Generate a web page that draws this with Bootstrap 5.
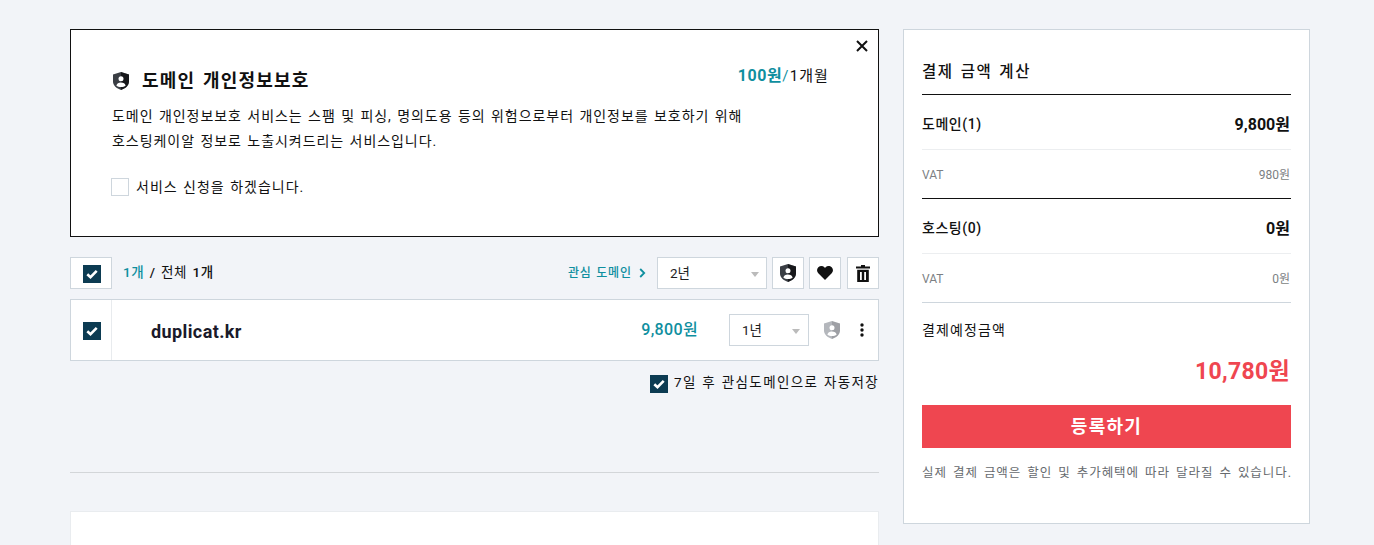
<!DOCTYPE html>
<html lang="ko">
<head>
<meta charset="utf-8">
<title>결제</title>
<link href="https://cdn.jsdelivr.net/npm/bootstrap@5.3.0/dist/css/bootstrap.min.css" rel="stylesheet">
<style>
html,body{height:545px;overflow:hidden}
body{background:#f2f4f8;color:#111;font-family:Roboto,"Noto Sans CJK KR",sans-serif;font-size:14px;line-height:1.5}
.shell{padding:29px 64px 0 70px;gap:24px}
.lcol{width:809px;flex:none}
.rcol{width:407px;height:495px;flex:none;background:#fff;border:1px solid #ced6dd;padding:0 18px}
.promo{height:208px;background:#fff;border:1px solid #111;padding:0 41px;position:relative}
.promo-close{position:absolute;top:9px;right:9px;width:14px;height:14px;padding:0;border:0;background:none;display:block;line-height:0}
.promo-head{padding-top:37px;height:68px}
.promo-title{font-size:18px;font-weight:700;margin:0 0 0 2px;line-height:27px;letter-spacing:1.2px;word-spacing:2px}
.promo-icon{margin-left:1px;margin-right:3px}
.sh-dark{color:#3a3e44;--half:.6}
.sh-gray{color:#b4b7bc;--half:.12}
.shield-half{fill:#000;fill-opacity:var(--half)}
.promo-price{font-size:15px;margin-right:8px;line-height:22px;margin-top:-2px;letter-spacing:1.1px}
.promo-price .amt{font-size:16px;font-weight:700;letter-spacing:.6px}
.teal{color:#0f8f9f}
.promo-text{font-size:14px;line-height:25px;margin:0;height:50px;margin-top:6px;letter-spacing:.95px;word-spacing:1px}
.promo-check{margin-top:23px;height:20px;gap:7px;font-size:14px;letter-spacing:1px;word-spacing:1px;margin-left:-1px}
.cbox{width:18px;height:18px;flex:none;background:#fff;border:1px solid #ced6dd;display:block}
.cbox-on{background:#0c3b52;border-color:#0c3b52;display:flex;align-items:center;justify-content:center}
.toolbar{height:32px;margin-top:20px}
.tool-check{width:42px;height:32px;background:#fff;border:1px solid #ced6dd;display:flex;align-items:center;justify-content:center;flex:none;padding:1px 0 0 1px}
.count{margin-left:11px;font-size:13.500px;letter-spacing:.6px;word-spacing:1.500px;margin-top:-1px}
.count b{font-weight:500}
.count .teal{font-weight:500}
.fav{font-size:12px;font-weight:500;margin-right:6px;text-decoration:none;gap:7px;letter-spacing:.9px;word-spacing:.5px}
.fake-select{height:32px;width:110px;background:#fff;border:1px solid #ced6dd;padding:0 7px 0 12px;font-size:13.500px;color:#222}
.fake-select.sm{width:80px;padding-right:8px}
.caret{width:0;height:0;border-left:4px solid transparent;border-right:4px solid transparent;border-top:5px solid #bbb;margin-top:2px}
.icon-btn{width:32px;height:32px;background:#fff;border:1px solid #ced6dd;padding:0;display:flex;align-items:center;justify-content:center;flex:none}
.gap5{gap:5px}
.last-btn{margin-left:1px}
.domain-row{height:62px;margin-top:10px;background:#fff;border:1px solid #ced6dd}
.row-check{width:41px;height:100%;border-right:1px solid #e8ebee;flex:none;padding:1px 0 0 1px}
.dom-name{margin-left:39px;font-size:18px;font-weight:700;color:#1a1a2a;letter-spacing:.4px;line-height:26px;margin-top:4px}
.dom-price{font-size:16px;font-weight:500;margin-right:31px;letter-spacing:.35px}
.row-icons{margin-left:15px;margin-right:14px;gap:20px}
.autosave{margin-top:13px;height:20px;gap:6px;font-size:13.500px;letter-spacing:1.350px;word-spacing:1px}
.autosave-label{margin-top:-3px}
.sep{margin-top:78px;border-top:1px solid #d3d6d9;height:0}
.lower{margin-top:38px;height:34px;background:#fff;border:1px solid #e9ecef;border-bottom:0}
.sum-title{height:65px;border-bottom:1px solid #111;padding-top:30px;font-size:15.500px;font-weight:500;line-height:24px;letter-spacing:1.600px;word-spacing:1.500px}
.sum-row{height:55px;font-size:14px;font-weight:500;border-bottom:1px solid #eceef0;padding:5px 1px 0 0;letter-spacing:.55px}
.sum-row strong{font-size:16px;font-weight:700;letter-spacing:0}
.sum-sub{height:49px;font-size:12px;color:#7c7f83;border-bottom:1px solid #111;padding:1px 1px 0 0}
.sum-sub.last{border-bottom-color:#ced6dd}
.due-label{margin-top:17px;font-size:14px;line-height:20px;letter-spacing:1.100px}
.due-amt{margin-top:15px;font-size:23px;font-weight:700;color:#ef4650;line-height:34px;letter-spacing:.3px;padding-right:1px}
.btn-reg{margin-top:16px;width:100%;height:43px;background:#ef4650;color:#fff;border:0;border-radius:0;font-size:18px;font-weight:700;padding:0;letter-spacing:1.300px}
.btn-reg:hover{background:#ef4650;color:#fff}
.note{margin-top:15px;font-size:12.500px;color:#666a6e;line-height:20px;white-space:nowrap;letter-spacing:.95px;word-spacing:2px}
</style>
</head>
<body>
<svg width="0" height="0" class="d-block" aria-hidden="true">
<defs>
<symbol id="shield" viewBox="0 0 16 18"><path d="M8 0 16 2.600V9.500C16 13.500 12.500 16.500 8 18 3.500 16.500 0 13.500 0 9.500V2.600Z" fill="currentColor"/><path class="shield-half" d="M8 0 16 2.600V9.500C16 13.500 12.500 16.500 8 18Z"/><circle cx="8" cy="6.800" r="2.500" fill="#fff"/><path d="M3.400 13.700C3.800 11.500 5.600 10.500 8 10.500s4.200 1 4.600 3.200C11.500 14.500 9.800 15 8 15s-3.500-.5-4.600-1.300Z" fill="#fff"/></symbol>
<symbol id="tick" viewBox="0 0 12 10"><path d="M1.300 5.200 4.500 8.200 10.700 1.800" fill="none" stroke="#fff" stroke-width="2.600"/></symbol>
</defs>
</svg>
<div class="shell d-flex align-items-start">
  <main class="lcol">
    <section class="promo">
      <button type="button" class="promo-close" aria-label="닫기"><svg width="14" height="14" viewBox="0 0 14 14"><path d="M2 2 12 12M12 2 2 12" stroke="#111" stroke-width="2" fill="none"/></svg></button>
      <div class="promo-head d-flex justify-content-between align-items-start">
        <div class="d-flex align-items-center gap-2">
          <svg width="16" height="18" class="promo-icon sh-dark"><use href="#shield"/></svg>
          <h2 class="promo-title">도메인 개인정보보호</h2>
        </div>
        <div class="promo-price"><span class="teal amt">100원</span><span class="teal">/</span>1개월</div>
      </div>
      <p class="promo-text">도메인 개인정보보호 서비스는 스팸 및 피싱, 명의도용 등의 위험으로부터 개인정보를 보호하기 위해<br>호스팅케이알 정보로 노출시켜드리는 서비스입니다.</p>
      <div class="promo-check d-flex align-items-center"><span class="cbox"></span><span>서비스 신청을 하겠습니다.</span></div>
    </section>

    <div class="toolbar d-flex align-items-center">
      <div class="tool-check"><span class="cbox cbox-on"><svg width="12" height="10"><use href="#tick"/></svg></span></div>
      <div class="count"><span class="teal">1개</span> <b>/</b> 전체 <b>1개</b></div>
      <div class="ms-auto d-flex align-items-center gap5">
        <a href="#" class="fav teal d-flex align-items-center">관심 도메인<svg width="7" height="10" viewBox="0 0 7 10"><path d="M1.200 1 5.200 5 1.200 9" stroke="#0f8f9f" stroke-width="1.800" fill="none"/></svg></a>
        <div class="fake-select d-flex align-items-center justify-content-between"><span>2년</span><span class="caret"></span></div>
        <button type="button" class="icon-btn" aria-label="개인정보보호"><svg width="16" height="18" class="sh-dark"><use href="#shield"/></svg></button>
        <button type="button" class="icon-btn" aria-label="관심"><svg width="16" height="14" viewBox="0 0 16 14"><path d="M8 14 1.300 7.300C-.4 5.600-.4 3 1.300 1.300 3 -.4 5.800-.4 7.400 1.200L8 1.900 8.600 1.200C10.200-.4 13-.4 14.700 1.300 16.400 3 16.400 5.600 14.700 7.300Z" fill="#111"/></svg></button>
        <button type="button" class="icon-btn last-btn" aria-label="삭제"><svg width="14" height="17" viewBox="0 0 14 17"><path d="M5 0H9V1.500H14V3.500H0V1.500H5ZM1.200 4.800H12.800V17H1.200ZM4 7V15H5.800V7ZM8.200 7V15H10V7Z" fill="#111" fill-rule="evenodd"/></svg></button>
      </div>
    </div>

    <div class="domain-row d-flex align-items-center">
      <div class="row-check d-flex align-items-center justify-content-center"><span class="cbox cbox-on"><svg width="12" height="10"><use href="#tick"/></svg></span></div>
      <div class="dom-name">duplicat.kr</div>
      <div class="ms-auto dom-price teal">9,800원</div>
      <div class="fake-select sm d-flex align-items-center justify-content-between"><span>1년</span><span class="caret"></span></div>
      <div class="row-icons d-flex align-items-center">
        <svg width="16" height="18" class="sh-gray"><use href="#shield"/></svg>
        <svg width="4" height="14" viewBox="0 0 4 14"><circle cx="2" cy="2" r="1.700" fill="#111"/><circle cx="2" cy="7" r="1.700" fill="#111"/><circle cx="2" cy="12" r="1.700" fill="#111"/></svg>
      </div>
    </div>

    <div class="autosave d-flex align-items-center justify-content-end"><span class="cbox cbox-on"><svg width="12" height="10"><use href="#tick"/></svg></span><span class="autosave-label">7일 후 관심도메인으로 자동저장</span></div>

    <div class="sep"></div>
    <div class="lower"></div>
  </main>

  <aside class="rcol">
    <div class="sum-title">결제 금액 계산</div>
    <div class="sum-row d-flex justify-content-between align-items-center"><span>도메인(1)</span><strong>9,800원</strong></div>
    <div class="sum-sub d-flex justify-content-between align-items-center"><span>VAT</span><span>980원</span></div>
    <div class="sum-row d-flex justify-content-between align-items-center"><span>호스팅(0)</span><strong>0원</strong></div>
    <div class="sum-sub last d-flex justify-content-between align-items-center"><span>VAT</span><span>0원</span></div>
    <div class="due-label">결제예정금액</div>
    <div class="due-amt text-end">10,780원</div>
    <button type="button" class="btn btn-reg">등록하기</button>
    <div class="note">실제 결제 금액은 할인 및 추가혜택에 따라 달라질 수 있습니다.</div>
  </aside>
</div>
<script src="https://cdn.jsdelivr.net/npm/bootstrap@5.3.0/dist/js/bootstrap.bundle.min.js"></script>
</body>
</html>
